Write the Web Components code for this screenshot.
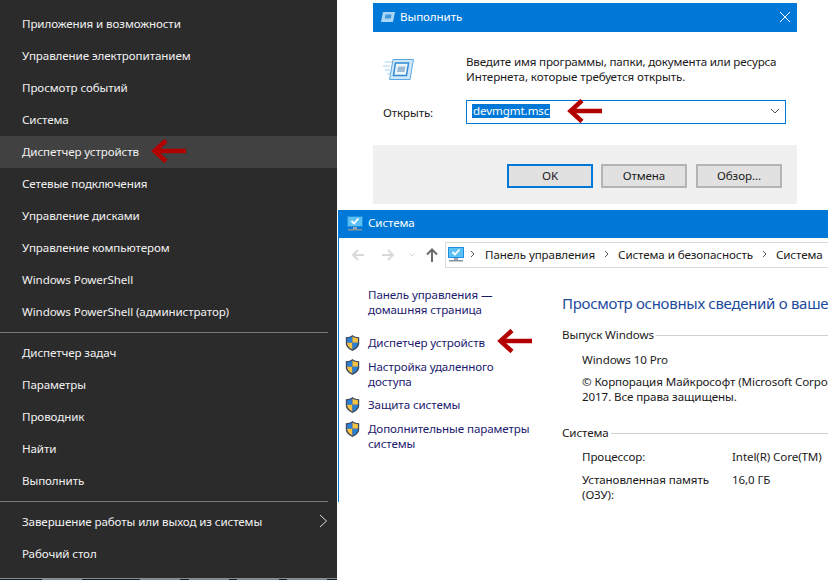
<!DOCTYPE html>
<html lang="ru">
<head>
<meta charset="utf-8">
<title>Диспетчер устройств</title>
<style>
	html, body { margin: 0; height: 580px; overflow: hidden; background: #fff; }
	body { font: 11.6px "Noto Sans", "Liberation Sans", sans-serif; letter-spacing: -0.1px; }
</style>
</head>
<body>
<win-desktop>
	<start-menu slot="menu">
		<menu-item>Приложения и возможности</menu-item>
		<menu-item>Управление электропитанием</menu-item>
		<menu-item>Просмотр событий</menu-item>
		<menu-item>Система</menu-item>
		<menu-item active>Диспетчер устройств<red-arrow slot="extra"></red-arrow></menu-item>
		<menu-item>Сетевые подключения</menu-item>
		<menu-item>Управление дисками</menu-item>
		<menu-item>Управление компьютером</menu-item>
		<menu-item>Windows PowerShell</menu-item>
		<menu-item>Windows PowerShell (администратор)</menu-item>
		<menu-sep></menu-sep>
		<menu-item>Диспетчер задач</menu-item>
		<menu-item>Параметры</menu-item>
		<menu-item>Проводник</menu-item>
		<menu-item>Найти</menu-item>
		<menu-item>Выполнить</menu-item>
		<menu-sep></menu-sep>
		<menu-item submenu>Завершение работы или выход из системы</menu-item>
		<menu-item>Рабочий стол</menu-item>
	</start-menu>
	<run-dialog slot="run"></run-dialog>
	<system-window slot="system"></system-window>
</win-desktop>

<script>
// small helper, every component just sets its html in the constructor
function shadow(el, html) {
	el.attachShadow({mode: 'open'}).innerHTML = html;
}

const MONITOR = `<svg width="16" height="15" viewBox="0 0 16 15" style="flex:none">
	<rect x="0" y="0" width="16" height="11" fill="#1f8fe0"/>
	<rect x="1" y="1" width="14" height="9" fill="#5cc0f4"/>
	<path d="M4.500 5l2.500 2.500 4.500-5" fill="none" stroke="#fff" stroke-width="1.800"/>
	<rect x="6" y="11" width="4" height="2" fill="#9aa6b0"/>
	<rect x="1" y="13" width="14" height="1.500" fill="#8796a3"/>
</svg>`;

class WinDesktop extends HTMLElement {
	constructor() {
		super();
		shadow(this, `<style>
			:host { display: grid; grid-template-columns: 337px 491px; width: 828px; height: 580px; }
			.right { display: flex; flex-direction: column; padding: 3px 0 0 1px; min-width: 0; }
			.run { display: block; padding-left: 35px; }
			.sys { display: block; margin-top: 6px; }
		</style>
		<slot name="menu"></slot>
		<div class="right">
			<div class="run"><slot name="run"></slot></div>
			<div class="sys"><slot name="system"></slot></div>
		</div>`);
	}
}

class StartMenu extends HTMLElement {
	constructor() {
		super();
		shadow(this, `<style>
			:host { display: flex; flex-direction: column; height: 580px; padding-top: 8px; box-sizing: border-box; background: #2b2b2b; color: #fff; }
			.bar { margin-top: auto; height: 1px; border-top: 1px solid #8d8d8d;
				background: linear-gradient(90deg, #12202b 42px, #6e8ba3 42px, #6e8ba3 82px, #12202b 82px, #12202b 140px, #6e8ba3 140px, #6e8ba3 180px, #12202b 180px, #12202b 189px, #6e8ba3 189px, #6e8ba3 229px, #12202b 229px, #12202b 237px, #6e8ba3 237px, #6e8ba3 279px, #12202b 279px, #12202b 287px, #6e8ba3 287px, #6e8ba3 327px, #12202b 327px); }
		</style><slot></slot><div class="bar"></div>`);
	}
}

class MenuItem extends HTMLElement {
	constructor() {
		super();
		const arrow = this.hasAttribute('submenu')
			? `<svg class="chev" width="9" height="14" viewBox="0 0 9 14"><path d="M1 1l6.500 6L1 13" fill="none" stroke="#e0e0e0"/></svg>` : '';
		shadow(this, `<style>
			:host { display: flex; align-items: center; flex: none; height: 32px; box-sizing: border-box; padding: 0 0 2px 22px; white-space: nowrap; color: #f2f2f2; }
			:host([active]) { background: #414141; }
			.chev { margin-left: auto; margin-right: 9px; }
			::slotted(red-arrow) { margin-left: 12px; }
		</style><slot></slot><slot name="extra"></slot>${arrow}`);
	}
}

class MenuSep extends HTMLElement {
	constructor() {
		super();
		shadow(this, `<style>
			:host { display: block; flex: none; height: 1px; margin: 4px 9px 4px 0; background: #7a7a7a; }
		</style>`);
	}
}

class RedArrow extends HTMLElement {
	constructor() {
		super();
		shadow(this, `<style>
			:host { display: inline-block; width: 36px; height: 24px; line-height: 0; }
		</style>
		<svg width="36" height="24" viewBox="0 0 36 24">
			<path d="M15 1.500L3.500 12 15 22.500" fill="none" stroke="#b30000" stroke-width="4.500"/>
			<path d="M4 12h31" stroke="#b30000" stroke-width="4.500"/>
		</svg>`);
	}
}

class ShieldIcon extends HTMLElement {
	constructor() {
		super();
		shadow(this, `<style>
			:host { display: inline-block; flex: none; width: 15px; height: 16px; line-height: 0; }
		</style>
		<svg width="15" height="16" viewBox="0 0 15 16">
			<path d="M7.500 0C5.700 1.400 3.500 2.200 .8 2.300V8.500c0 3.300 2.900 5.800 6.700 7.500 3.800-1.700 6.700-4.200 6.700-7.500V2.300C11.500 2.200 9.300 1.400 7.500 0z" fill="#3d4a5c"/>
			<path d="M7.500 1.600v6.200H2.100V3.300C4 3.200 5.900 2.700 7.500 1.600z" fill="#2a7fd6"/>
			<path d="M7.500 1.600c1.600 1.100 3.500 1.600 5.400 1.700v4.500H7.500z" fill="#f6c244"/>
			<path d="M2.100 7.800h5.400v6.700c-2.700-1.300-5.400-3.400-5.400-6.700z" fill="#f6c244"/>
			<path d="M7.500 7.800h5.400c0 3.300-2.700 5.400-5.400 6.700z" fill="#2a7fd6"/>
		</svg>`);
	}
}

class WinButton extends HTMLElement {
	constructor() {
		super();
		shadow(this, `<style>
			:host { display: flex; align-items: center; justify-content: center; box-sizing: border-box; width: 86px; height: 24px; padding-bottom: 2px; background: #e1e1e1; border: 2px solid #b4b4b4; color: #1a1a1a; }
			:host([primary]) { border-color: #0078d7; }
		</style><slot></slot>`);
	}
}

class RunDialog extends HTMLElement {
	constructor() {
		super();
		shadow(this, `<style>
			:host { display: block; width: 424px; height: 201px; color: #1a1a1a; }
			.title { display: flex; align-items: center; height: 29px; box-sizing: border-box; padding: 0 6px 2px 7px; gap: 5px; background: #0078d7; color: #fff; }
			.title .x { margin-left: auto; line-height: 0; }
			.body { display: flex; flex-direction: column; height: 113px; box-sizing: border-box; padding: 20px 11px 0 10px; background: #fff; }
			.intro { display: flex; gap: 52px; }
			.intro svg { flex: none; margin-top: 7px; }
			.intro .txt { line-height: 15px; padding-top: 2px; white-space: nowrap; }
			.intro .tight { letter-spacing: -0.17px; }
			.open { display: flex; align-items: center; margin-top: 16px; }
			.open .lbl { flex: none; width: 83px; }
			.combo { position: relative; display: flex; align-items: center; box-sizing: border-box; flex: 1; height: 24px; border: 1px solid #0078d7; padding: 0 5px 2px; }
			.sel { background: #0078d7; color: #fff; padding: 0 1px; line-height: 14px; }
			.combo red-arrow { position: absolute; left: 100px; top: -2px; }
			.combo svg.dn { margin-left: auto; }
			.foot { display: flex; justify-content: flex-end; gap: 8px; height: 59px; box-sizing: border-box; padding: 19px 15px 0 0; background: #f0f0f0; }
			.foot win-button:last-child { margin-left: 1px; }
		</style>
		<div class="title">
			<svg width="15" height="10" viewBox="0 0 15 10"><path d="M3 0h12l-2 10H1z" fill="#a9d6f5"/><path d="M5.500 2.500h6l-.7 4h-6z" fill="#3f97dc"/></svg>
			<span>Выполнить</span>
			<span class="x"><svg width="12" height="12" viewBox="0 0 12 12"><path d="M1 1l10 10M11 1L1 11" stroke="#fff" stroke-width="1"/></svg></span>
		</div>
		<div class="body">
			<div class="intro">
				<svg width="31" height="21" viewBox="0 0 31 21"><path d="M10 .5h20.500l-3.500 20H6.500z" fill="#cfe8f9" stroke="#5aa8e0"/><path d="M12.500 4h13l-2 12.500h-13z" fill="#eef7fd" stroke="#2f8ad4" stroke-width="1.500"/><path d="M15 7.500h7.500l-1 5.500H14z" fill="#9dbbd2"/><path d="M2 3h7M0 7h7M2 11h5M4 15h3" stroke="#a8d4f2"/></svg>
				<div class="txt"><span class="tight">Введите имя программы, папки, документа или ресурса</span><br>Интернета, которые требуется открыть.</div>
			</div>
			<div class="open">
				<span class="lbl">Открыть:</span>
				<div class="combo">
					<span class="sel">devmgmt.msc</span>
					<red-arrow></red-arrow>
					<svg class="dn" width="10" height="6" viewBox="0 0 10 6"><path d="M1 1l4 4 4-4" fill="none" stroke="#555"/></svg>
				</div>
			</div>
		</div>
		<div class="foot">
			<win-button primary>OK</win-button>
			<win-button>Отмена</win-button>
			<win-button>Обзор...</win-button>
		</div>`);
	}
}

class SidePanel extends HTMLElement {
	constructor() {
		super();
		shadow(this, `<style>
			:host { display: block; width: 223px; flex: none; padding: 15px 0 0 6px; box-sizing: border-box; color: #1c1a6e; line-height: 15px; white-space: nowrap; }
			.home { padding-left: 23px; margin-bottom: 18px; }
			.row { display: flex; gap: 8px; margin-bottom: 8px; align-items: flex-start; }
			.main-arrow { position: relative; }
			red-arrow { position: absolute; left: 129px; top: -6px; }
		</style>
		<div class="home">Панель управления —<br>домашняя страница</div>
		<div class="row"><shield-icon></shield-icon><span class="main-arrow">Диспетчер устройств<red-arrow></red-arrow></span></div>
		<div class="row"><shield-icon></shield-icon><span>Настройка удаленного<br>доступа</span></div>
		<div class="row"><shield-icon></shield-icon><span>Защита системы</span></div>
		<div class="row"><shield-icon></shield-icon><span>Дополнительные параметры<br>системы</span></div>`);
	}
}

class GroupHead extends HTMLElement {
	constructor() {
		super();
		shadow(this, `<style>
			:host { display: flex; align-items: center; gap: 2px; height: 15px; color: #1a1a1a; }
			i { flex: 1; height: 1px; background: #cfcfcf; margin-top: 2px; }
		</style><slot></slot><i></i>`);
	}
}

class SystemWindow extends HTMLElement {
	constructor() {
		super();
		shadow(this, `<style>
			:host { display: block; height: 292px; box-sizing: border-box; border-left: 1px solid #0078d7; color: #1a1a1a; overflow: hidden; background: #fff; }
			.title { display: flex; align-items: center; gap: 5px; height: 28px; box-sizing: border-box; padding: 0 0 1px 8px; background: #0078d7; color: #fff; }
			.title span { position: relative; top: -1px; }
			.nav { display: flex; align-items: center; height: 34px; padding-left: 13px; }
			.nav .btns { display: flex; align-items: center; flex: none; line-height: 0; }
			.addr { display: flex; align-items: center; flex: 1; min-width: 0; height: 22px; margin-left: 7px; padding: 0 0 2px 2px; border: 1px solid #d9d9d9; border-right: 0; white-space: nowrap; overflow: hidden; }
			.addr svg.gt { flex: none; margin: 0 9px; }
			.addr svg.gt.first { margin: 0 10px 0 6px; }
			.cols { display: flex; }
			.main { flex: 1; min-width: 0; padding-top: 21px; white-space: nowrap; overflow: hidden; }
			h1 { margin: 0 0 14px; font-size: 15px; font-weight: 400; letter-spacing: -0.3px; color: #1c4a9c; line-height: 20px; }
			.box { padding: 10px 0 0 20px; line-height: 15px; }
			.box p { margin: 0 0 7px; }
			.sec2 { margin-top: 21px; }
			.info { display: grid; grid-template-columns: 150px 1fr; padding: 9px 0 0 20px; row-gap: 8px; line-height: 15px; }
		</style>
		<div class="title">${MONITOR}<span>Система</span></div>
		<div class="nav">
			<div class="btns">
				<svg width="12" height="12" viewBox="0 0 12 12"><path d="M6 1L1 6l5 5M1.500 6H12" fill="none" stroke="#d8d8d8" stroke-width="1.800"/></svg>
				<svg style="margin-left:18px" width="12" height="12" viewBox="0 0 12 12"><path d="M6 1l5 5-5 5M10.500 6H0" fill="none" stroke="#d8d8d8" stroke-width="1.800"/></svg>
				<svg style="margin-left:15px" width="6" height="4" viewBox="0 0 6 4"><path d="M.5 .5L3 3 5.500 .5" fill="none" stroke="#d8d8d8"/></svg>
				<svg style="margin-left:11px" width="12" height="14" viewBox="0 0 12 14"><path d="M1 6.500L6 1.500l5 5M6 2v12" fill="none" stroke="#6b6b6b" stroke-width="2"/></svg>
			</div>
			<div class="addr">${MONITOR}
				<svg class="gt first" width="5" height="8" viewBox="0 0 5 8"><path d="M1 1l3 3-3 3" fill="none" stroke="#555"/></svg><span>Панель управления</span>
				<svg class="gt" width="5" height="8" viewBox="0 0 5 8"><path d="M1 1l3 3-3 3" fill="none" stroke="#555"/></svg><span>Система и безопасность</span>
				<svg class="gt" width="5" height="8" viewBox="0 0 5 8"><path d="M1 1l3 3-3 3" fill="none" stroke="#555"/></svg><span>Система</span>
			</div>
		</div>
		<div class="cols">
			<side-panel></side-panel>
			<div class="main">
				<h1>Просмотр основных сведений о ваше</h1>
				<group-head>Выпуск Windows</group-head>
				<div class="box">
					<p>Windows 10 Pro</p>
					<p>© Корпорация Майкрософт (Microsoft Corpo<br>2017. Все права защищены.</p>
				</div>
				<group-head class="sec2">Система</group-head>
				<div class="info">
					<span>Процессор:</span><span>Intel(R) Core(TM)</span>
					<span>Установленная память<br>(ОЗУ):</span><span>16,0 ГБ</span>
				</div>
			</div>
		</div>`);
	}
}

customElements.define('win-desktop', WinDesktop);
customElements.define('start-menu', StartMenu);
customElements.define('menu-item', MenuItem);
customElements.define('menu-sep', MenuSep);
customElements.define('red-arrow', RedArrow);
customElements.define('shield-icon', ShieldIcon);
customElements.define('win-button', WinButton);
customElements.define('run-dialog', RunDialog);
customElements.define('side-panel', SidePanel);
customElements.define('group-head', GroupHead);
customElements.define('system-window', SystemWindow);
</script>
</body>
</html>
